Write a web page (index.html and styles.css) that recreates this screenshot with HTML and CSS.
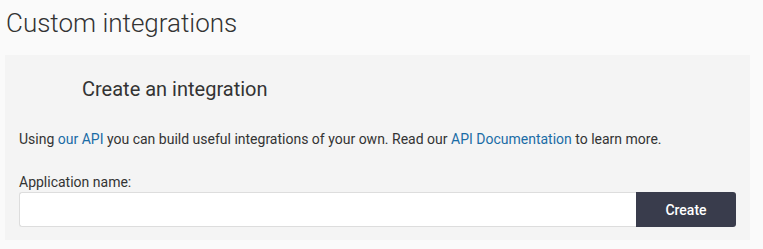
FILE: index.html
```html
<!DOCTYPE html>
<html lang="en">
<head>
  <meta charset="UTF-8" />
  <title>Custom integrations</title>
  <link rel="stylesheet" href="styles.css">
</head>
<body>
  <h1 class="page-title">Custom integrations</h1>

  <section class="panel">
    <h2 class="panel-title">Create an integration</h2>
    <p class="intro">Using <a href="#">our API</a> you can build useful integrations of your own. Read our <a href="#">API Documentation</a> to learn more.</p>

    <form class="create-form">
      <label for="app-name">Application name:</label>
      <div class="field-row">
        <input type="text" id="app-name">
        <button type="button">Create</button>
      </div>
    </form>
  </section>
</body>
</html>
```

FILE: styles.css
```css
* { margin: 0; padding: 0; box-sizing: border-box; }
body { font-family: Roboto, "Liberation Sans", sans-serif; background: #fafafa; color: #333; padding: 6px 13px 0 5px; }
.page-title { font-size: 26px; font-weight: 300; color: #333; line-height: 34px; margin: 0 0 15px 1px; }
.panel { background: #f4f4f4; padding: 21px 14px 13px 14px; }
.panel-title { font-size: 20px; font-weight: 400; color: #333; line-height: 26px; margin-left: 63px; margin-bottom: 27px; }
.intro { font-size: 14px; line-height: 20px; color: #333; margin-bottom: 25px; }
.intro a { color: #1a6ca6; text-decoration: none; }
.create-form label { display: block; font-size: 14px; line-height: 17px; color: #333; margin-bottom: 1px; }
.field-row { display: flex; width: 717px; height: 35px; }
.field-row input { flex: 1; border: 1px solid #ddd; border-right: none; border-radius: 3px 0 0 3px; background: #fff; font: inherit; }
.field-row button { width: 100px; border: none; border-radius: 0 3px 3px 0; background: #393c4c; color: #fff; font: 500 14px Roboto, "Liberation Sans", sans-serif; }
```
